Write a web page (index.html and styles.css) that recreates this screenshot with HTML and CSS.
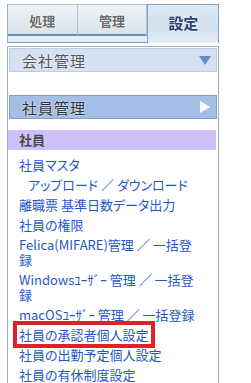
FILE: index.html
```html
<!DOCTYPE html>
<html>
  <head>
    <meta charset="utf-8" />
    <link rel="stylesheet" href="styles.css">
  </head>
  <body>
    <!-- タブ -->
    <div class="tabs">
      <div class="tab">処理</div>
      <div class="tab">管理</div>
      <div class="tab active">設定</div>
    </div>

    <!-- メニュー -->
    <div class="menu-panel">
      <div class="group-head closed">
        <span>会社管理</span>
        <i class="arrow-down"></i>
      </div>

      <div class="group-head open">
        <span>社員管理</span>
        <i class="arrow-right"></i>
      </div>

      <div class="section-title">社員</div>
      <ul class="link-list">
        <li><a href="#">社員マスタ</a></li>
        <li class="indent"><a href="#">アップロード ／ ダウンロード</a></li>
        <li><a href="#">離職票 基準日数データ出力</a></li>
        <li><a href="#">社員の権限</a></li>
        <li><a href="#">Felica(MIFARE)管理 ／ 一括登録</a></li>
        <li><a href="#">Windowsﾕｰｻﾞｰ 管理 ／ 一括登録</a></li>
        <li><a href="#">macOSﾕｰｻﾞｰ 管理 ／ 一括登録</a></li>
        <li><a href="#" class="marked">社員の承認者個人設定</a></li>
        <li><a href="#">社員の出勤予定個人設定</a></li>
        <li><a href="#">社員の有休制度設定</a></li>
      </ul>
    </div>
  </body>
</html>
```

FILE: styles.css
```css
body {
  margin: 0;
  padding: 4px 0 0 7px;
  background: #fff;
  font-family: "Noto Sans CJK JP", "DejaVu Sans", sans-serif;
  overflow: hidden;
}

/* タブ */
.tabs {
  display: flex;
  align-items: flex-start;
  width: 211px;
  height: 38px;
  border-left: 1px solid #8fb0cc;
  border-bottom: 1px solid #6f9bc6;
  background: #e5edf5;
}

.tab {
  width: 69px;
  height: 27px;
  padding-top: 2px;
  border: 1px solid #adc0cd;
  border-left: none;
  border-bottom: 2px solid #6491c2;
  background: linear-gradient(#eef3f6, #dae3ea);
  text-align: center;
  line-height: 27px;
  font-size: 13px;
  font-weight: bold;
  color: #6a6a6a;
  text-shadow: 0 0 2px #fff, 0 0 1px #fff;
}

.tab.active {
  width: 70px;
  height: 36px;
  padding-top: 2px;
  border: 1px solid #7fa6cc;
  border-bottom: none;
  background: linear-gradient(#dce8f2, #d3e1ee 60%, #e5edf5);
  font-size: 15px;
  line-height: 32px;
  color: #2c3f72;
}

/* メニュー */
.menu-panel {
  margin-top: 3px;
  width: 210px;
  height: 360px;
  border: 1px solid #9db2bf;
  padding: 1px 0 0;
}

.group-head {
  display: flex;
  align-items: center;
  justify-content: space-between;
  margin: 0 1px;
  height: 22px;
  padding: 0 5px 0 12px;
  font-size: 15px;
  letter-spacing: 1px;
  color: #555;
  text-shadow: 0 0 2px #fff;
}

.group-head.closed {
  background: #d5e1f2;
  border: 1px solid #bfcee2;
}

.group-head.open {
  margin-top: 23px;
  background: #a5bee6;
  border: 1px solid #809fcf;
  color: #333;
}

.arrow-down {
  width: 0;
  height: 0;
  border-left: 6px solid transparent;
  border-right: 6px solid transparent;
  border-top: 9px solid #5f8fc2;
}

.arrow-right {
  width: 0;
  height: 0;
  margin-right: 1px;
  border-top: 6px solid transparent;
  border-bottom: 6px solid transparent;
  border-left: 10px solid #fff;
}

.section-title {
  margin: 11px 2px 0 0;
  height: 20px;
  padding-left: 11px;
  background: #cec0f9;
  font-size: 13px;
  font-weight: bold;
  line-height: 20px;
  color: #4a4a4a;
}

.link-list {
  list-style: none;
  margin: 0;
  padding: 5px 0 0 11px;
  width: 184px;
}

.link-list li {
  padding: 2px 0 3px;
  font-size: 13px;
  line-height: 15px;
  font-feature-settings: "palt";
}

.link-list li.indent {
  padding-left: 9px;
}

.link-list a {
  color: #1f58c9;
  text-decoration: none;
}

/* 赤枠 */
.link-list a.marked {
  display: inline-block;
  outline: 4px solid #e2202a;
  outline-offset: 2px;
}
```
